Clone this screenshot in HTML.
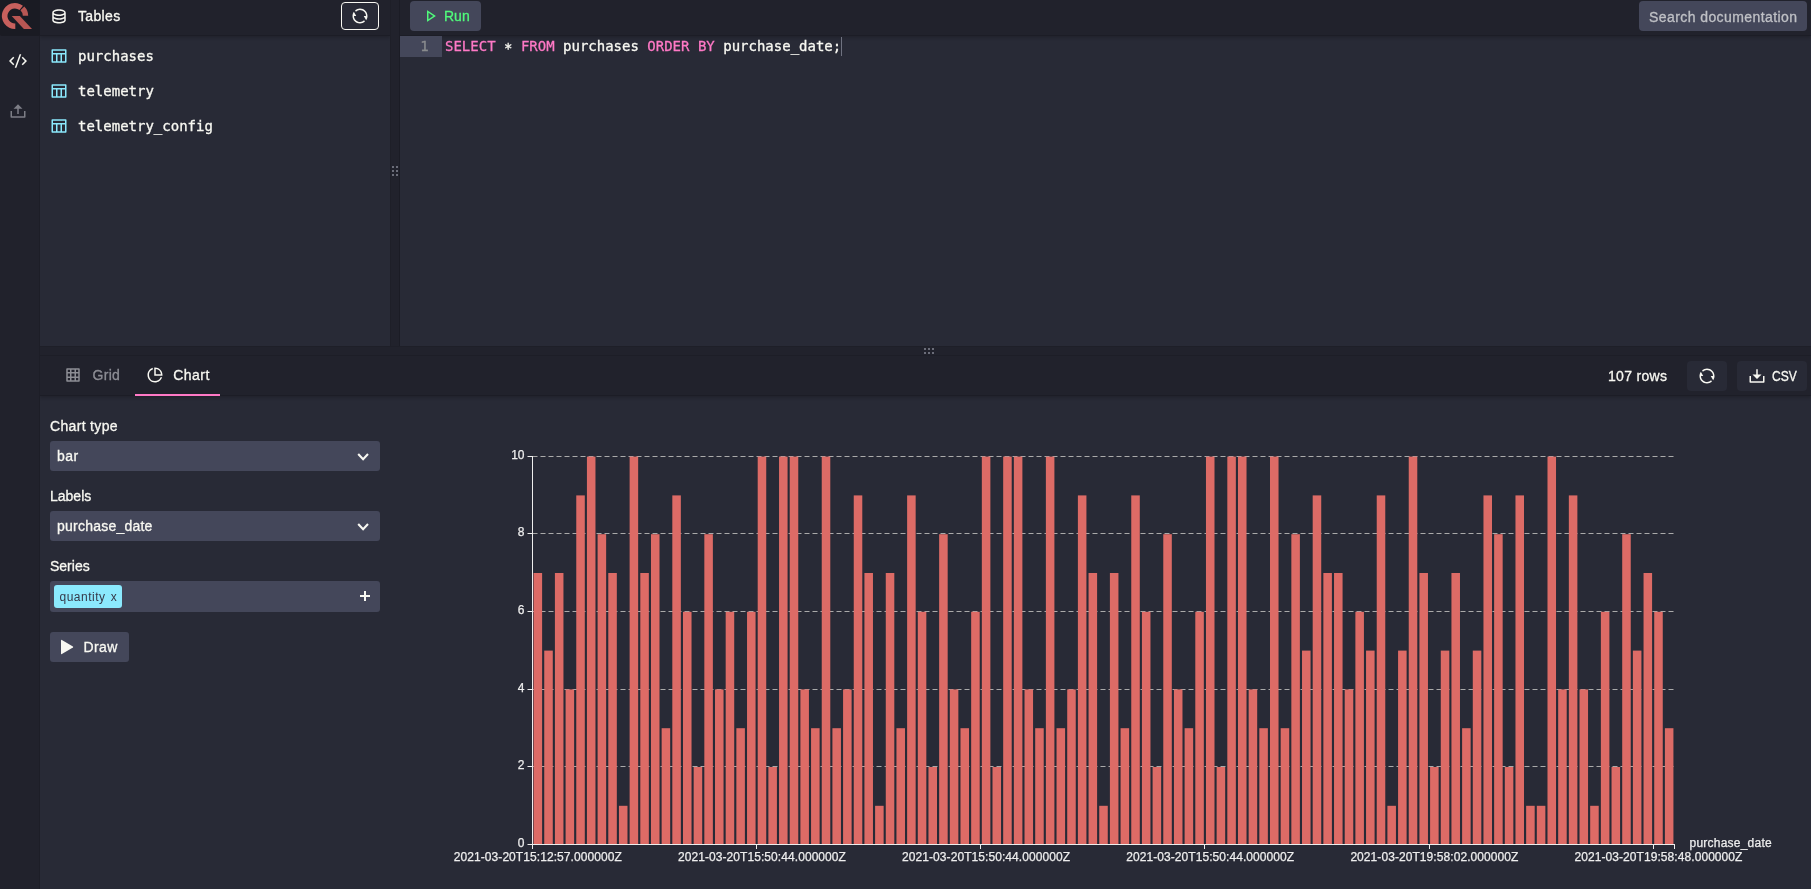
<!DOCTYPE html>
<html lang="en">
<head>
<meta charset="utf-8">
<title>QuestDB · Console</title>
<style>
*{box-sizing:border-box}
html,body{margin:0;padding:0}
body{width:1811px;height:889px;overflow:hidden;position:relative;background:#282a36;color:#f8f8f2;
  font-family:"Liberation Sans",sans-serif;font-size:14px;line-height:1}
#root{position:absolute;left:0;top:0;width:1811px;height:889px;will-change:transform;overflow:hidden}
.abs{position:absolute}
.mono{font-family:"DejaVu Sans Mono","Liberation Mono",monospace}
#sidebar{left:0;top:0;width:40px;height:889px;background:#21222c;border-right:1px solid #1d1e27}
#logo{left:0;top:0;width:40px;height:36px;background:#1a1b23;border-radius:0 0 2px 2px}
#lhead{left:40px;top:0;width:350px;height:36px;background:#21222c;border-bottom:1px solid #1c1d26;box-shadow:0 2px 3px rgba(0,0,0,.18)}
#vsplit{left:390px;top:0;width:10px;height:346px;background:#21222c;border-left:1px solid #1e1f28;border-right:1px solid #1b1c25}
#ehead{left:400px;top:0;width:1411px;height:36px;background:#21222c;border-bottom:1px solid #1c1d26;box-shadow:0 2px 3px rgba(0,0,0,.18)}
#hsplit{left:40px;top:346px;width:1771px;height:10px;background:#21222c;border-top:1px solid #1e1f28;border-bottom:1px solid #1e1f28}
#rhead{left:40px;top:356px;width:1771px;height:40px;background:#21222c;border-bottom:1px solid #1c1d26;box-shadow:0 2px 3px rgba(0,0,0,.18)}
.t{white-space:nowrap;position:absolute;-webkit-text-stroke:.3px}
.btn{position:absolute;border-radius:4px;background:#44475a}
.sel{position:absolute;left:50px;width:330px;height:30px;border-radius:3px;background:#44475a}
.chart{position:absolute;left:390px;top:396px}
.ctext{font-family:"Liberation Sans",sans-serif}
svg{display:block;overflow:visible}
</style>
</head>
<body>
<div id="root">

<!-- top-left: tables pane -->
<div class="abs" id="lhead"></div>
<div class="abs" id="ehead"></div>
<div class="abs" id="vsplit"></div>
<div class="abs" id="hsplit"></div>
<div class="abs" id="rhead"></div>

<!-- sidebar -->
<div class="abs" id="sidebar"></div>
<div class="abs" id="logo"></div>

<!-- Tables header -->
<span class="t" style="left:78px;top:9px;font-size:14px;letter-spacing:.35px">Tables</span>
<div class="abs" style="left:341px;top:2px;width:38px;height:28px;border:1px solid #f8f8f2;border-radius:4px;background:#282a36"></div>

<!-- table list -->
<span class="t mono" style="left:78px;top:49px;font-size:14px">purchases</span>
<span class="t mono" style="left:78px;top:84px;font-size:14px">telemetry</span>
<span class="t mono" style="left:78px;top:119px;font-size:14px">telemetry_config</span>

<!-- editor header -->
<div class="btn" style="left:410px;top:1px;width:71px;height:30px"></div>
<span class="t" style="left:444px;top:9px;font-size:14px;color:#50fa7b">Run</span>
<div class="btn" style="left:1639px;top:1px;width:168px;height:30px"></div>
<span class="t" style="left:1649px;top:10px;font-size:14px;color:#bfc0c5;letter-spacing:.42px">Search documentation</span>

<!-- editor -->
<div class="abs" style="left:400px;top:36px;width:42px;height:21px;background:#44475a"></div>
<span class="t mono" style="left:420.300px;top:39px;font-size:14px;color:#8a8b8e">1</span>
<span class="t mono" style="left:445px;top:39px;font-size:14px;white-space:pre"><span style="color:#ff79c6">SELECT</span> <span style="position:relative;top:2px">*</span> <span style="color:#ff79c6">FROM</span> purchases <span style="color:#ff79c6">ORDER</span> <span style="color:#ff79c6">BY</span> purchase_date;</span>
<div class="abs" style="left:841px;top:37px;width:1px;height:19px;background:#6f7280"></div>

<!-- result header -->
<span class="t" style="left:92.500px;top:368px;font-size:14px;color:#8d8e95;letter-spacing:.3px">Grid</span>
<span class="t" style="left:173.300px;top:368px;font-size:14px;letter-spacing:.45px">Chart</span>
<div class="abs" style="left:135px;top:394px;width:85px;height:2px;background:#ff79c6"></div>
<span class="t" style="left:1608px;top:369px;font-size:14px;letter-spacing:.3px">107 rows</span>
<div class="btn" style="left:1687px;top:361px;width:40px;height:30px;background:#282a36"></div>
<div class="btn" style="left:1737px;top:361px;width:70px;height:30px;background:#282a36"></div>
<span class="t" style="left:1771.500px;top:369px;font-size:14px;transform:scaleX(.86);transform-origin:0 0">CSV</span>

<!-- chart controls -->
<span class="t" style="left:50px;top:419px;font-size:14px;letter-spacing:.33px">Chart type</span>
<div class="sel" style="top:441px"></div>
<span class="t" style="left:57px;top:449px;font-size:14px;letter-spacing:.5px">bar</span>
<span class="t" style="left:50px;top:489px;font-size:14px">Labels</span>
<div class="sel" style="top:511px"></div>
<span class="t" style="left:57px;top:519px;font-size:14px;letter-spacing:.23px">purchase_date</span>
<span class="t" style="left:50px;top:559px;font-size:14px">Series</span>
<div class="sel" style="top:581px;height:31px"></div>
<div class="abs" style="left:54px;top:585px;width:68px;height:23px;border-radius:3px;background:#8be9fd"></div>
<span class="t" style="left:59.500px;top:591px;font-size:12px;color:#363949;letter-spacing:.5px;word-spacing:1.300px;-webkit-text-stroke:0">quantity x</span>
<div class="btn" style="left:50px;top:632px;width:79px;height:30px;border-radius:3px"></div>
<span class="t" style="left:83.500px;top:640px;font-size:14px;letter-spacing:.4px">Draw</span>

<!-- icons -->
<svg class="abs" style="left:50px;top:7px" width="18" height="18" viewBox="0 0 24 24" fill="#f8f8f2"><path d="M5 12.5c0 .313.461.858 1.53 1.393C7.914 14.585 9.877 15 12 15c2.123 0 4.086-.415 5.47-1.107 1.069-.535 1.53-1.08 1.53-1.393v-2.171C17.35 11.349 14.827 12 12 12s-5.35-.652-7-1.671V12.5zm14 2.829C17.35 16.349 14.827 17 12 17s-5.35-.652-7-1.671V17.5c0 .313.461.858 1.53 1.393C7.914 19.585 9.877 20 12 20c2.123 0 4.086-.415 5.47-1.107 1.069-.535 1.53-1.08 1.53-1.393v-2.171zM3 17.5v-10C3 5.015 7.03 3 12 3s9 2.015 9 4.5v10c0 2.485-4.03 4.5-9 4.5s-9-2.015-9-4.500zm9-7.5c2.123 0 4.086-.415 5.47-1.107C18.539 8.358 19 7.813 19 7.5c0-.313-.461-.858-1.53-1.393C16.086 5.415 14.123 5 12 5c-2.123 0-4.086.415-5.47 1.107C5.461 6.642 5 7.187 5 7.5c0 .313.461.858 1.53 1.393C7.914 9.585 9.877 10 12 10z"/></svg>
<svg class="abs" style="left:50px;top:47px" width="18" height="18" viewBox="0 0 24 24" fill="#8be9fd"><path d="M4 8h16V5H4v3zm10 11v-9h-4v9h4zm2 0h4v-9h-4v9zm-8 0v-9H4v9h4zM3 3h18a1 1 0 0 1 1 1v16a1 1 0 0 1-1 1H3a1 1 0 0 1-1-1V4a1 1 0 0 1 1-1z"/></svg>
<svg class="abs" style="left:50px;top:82px" width="18" height="18" viewBox="0 0 24 24" fill="#8be9fd"><path d="M4 8h16V5H4v3zm10 11v-9h-4v9h4zm2 0h4v-9h-4v9zm-8 0v-9H4v9h4zM3 3h18a1 1 0 0 1 1 1v16a1 1 0 0 1-1 1H3a1 1 0 0 1-1-1V4a1 1 0 0 1 1-1z"/></svg>
<svg class="abs" style="left:50px;top:117px" width="18" height="18" viewBox="0 0 24 24" fill="#8be9fd"><path d="M4 8h16V5H4v3zm10 11v-9h-4v9h4zm2 0h4v-9h-4v9zm-8 0v-9H4v9h4zM3 3h18a1 1 0 0 1 1 1v16a1 1 0 0 1-1 1H3a1 1 0 0 1-1-1V4a1 1 0 0 1 1-1z"/></svg>
<svg class="abs" style="left:9px;top:52px" width="18" height="18" viewBox="0 0 24 24" fill="#f8f8f2"><path d="M24 12l-5.657 5.657-1.414-1.414L21.172 12l-4.243-4.243 1.414-1.414L24 12zM2.828 12l4.243 4.243-1.414 1.414L0 12l5.657-5.657L7.07 7.757 2.828 12zm6.96 9H7.66l6.552-18h2.128L9.788 21z"/></svg>
<svg class="abs" style="left:9px;top:102px" width="18" height="18" viewBox="0 0 24 24" fill="#7d7e86"><path d="M4 19h16v-7h2v8a1 1 0 0 1-1 1H3a1 1 0 0 1-1-1v-8h2v7zm9-10v7h-2V9H6l6-6 6 6h-5z"/></svg>
<svg class="abs" style="left:351px;top:7px" width="18" height="18" viewBox="0 0 24 24" fill="#f8f8f2"><path d="M5.463 4.433A9.961 9.961 0 0 1 12 2c5.523 0 10 4.477 10 10 0 2.136-.67 4.116-1.81 5.74L17 12h3A8 8 0 0 0 6.46 6.228l-.997-1.795zm13.074 15.134A9.961 9.961 0 0 1 12 22C6.477 22 2 17.523 2 12c0-2.136.67-4.116 1.81-5.74L7 12H4a8 8 0 0 0 13.540 5.772l.997 1.795z"/></svg>
<svg class="abs" style="left:420.5px;top:7px" width="18" height="18" viewBox="0 0 24 24" fill="#50fa7b"><path d="M16.394 12L10 7.737v8.526L16.394 12zm2.982.416L8.777 19.482A.5.5 0 0 1 8 19.066V4.934a.5.5 0 0 1 .777-.416l10.599 7.066a.5.5 0 0 1 0 .832z"/></svg>
<svg class="abs" style="left:64px;top:366px" width="18" height="18" viewBox="0 0 24 24" fill="#8d8e95"><path d="M14 10h-4v4h4v-4zm2 0v4h3v-4h-3zm-2 9v-3h-4v3h4zm2 0h3v-3h-3v3zM14 5h-4v3h4V5zm2 0v3h3V5h-3zm-8 5H5v4h3v-4zm0 9v-3H5v3h3zM8 5H5v3h3V5zM4 3h16a1 1 0 0 1 1 1v16a1 1 0 0 1-1 1H4a1 1 0 0 1-1-1V4a1 1 0 0 1 1-1z"/></svg>
<svg class="abs" style="left:146px;top:366px" width="18" height="18" viewBox="0 0 24 24" fill="#f8f8f2"><path d="M9 2.458v2.124A8.003 8.003 0 0 0 12 20a8.003 8.003 0 0 0 7.419-5h2.123c-1.274 4.057-5.064 7-9.542 7-5.523 0-10-4.477-10-10 0-4.478 2.943-8.268 7-9.542zM12 2c5.523 0 10 4.477 10 10 0 .338-.017.671-.05 1H11V2.050c.329-.033.662-.05 1-.05zm1 2.062V11h6.938A8.004 8.004 0 0 0 13 4.062z"/></svg>
<svg class="abs" style="left:1698px;top:367px" width="18" height="18" viewBox="0 0 24 24" fill="#f8f8f2"><path d="M5.463 4.433A9.961 9.961 0 0 1 12 2c5.523 0 10 4.477 10 10 0 2.136-.67 4.116-1.81 5.74L17 12h3A8 8 0 0 0 6.46 6.228l-.997-1.795zm13.074 15.134A9.961 9.961 0 0 1 12 22C6.477 22 2 17.523 2 12c0-2.136.67-4.116 1.81-5.74L7 12H4a8 8 0 0 0 13.540 5.772l.997 1.795z"/></svg>
<svg class="abs" style="left:1748px;top:366.5px" width="18" height="18" viewBox="0 0 24 24" fill="#f8f8f2"><path d="M13 10h5l-6 6-6-6h5V3h2v7zm-9 9h16v-7h2v8a1 1 0 0 1-1 1H3a1 1 0 0 1-1-1v-8h2v7z"/></svg>
<svg class="abs" style="left:353px;top:441px" width="20" height="30" viewBox="0 0 20 30"><polyline points="5.200,13 10.100,18.200 15,13" fill="none" stroke="#f8f8f2" stroke-width="2.100"/></svg>
<svg class="abs" style="left:353px;top:511px" width="20" height="30" viewBox="0 0 20 30"><polyline points="5.200,13 10.100,18.200 15,13" fill="none" stroke="#f8f8f2" stroke-width="2.100"/></svg>
<svg class="abs" style="left:359px;top:590px" width="12" height="12" viewBox="0 0 12 12" fill="#f8f8f2"><rect x="5" y="1" width="2" height="10"/><rect x="1" y="5" width="10" height="2"/></svg>
<svg class="abs" style="left:58px;top:637px" width="18" height="20" viewBox="0 0 18 20"><path d="M3 3.4v13.200a.6.6 0 0 0 .9.500l11-6.600a.6.6 0 0 0 0-1L3.900 2.900a.6.6 0 0 0-.9.500z" fill="#f8f8f2"/></svg>
<svg class="abs" style="left:0;top:0" width="40" height="36" viewBox="0 0 40 36">
<path d="M15.300 29A13.050 13.050 0 1 1 22.930 5.670L19.490 10.080A7.450 7.450 0 1 0 15.300 23.400z" fill="#c8605d"/>
<path d="M24.300 6.550A13.300 13.300 0 0 1 28.200 15.800H22.800A7.900 7.900 0 0 0 20.490 10.360z" fill="#b95754"/>
<path d="M11.700 16H19.800L32 28.900H23.900z" fill="#b85653"/>
</svg>
<svg class="abs" style="left:392px;top:166px" width="6" height="10" viewBox="0 0 6 10" fill="#6b6d79"><rect x="0" y="0" width="2" height="2"/><rect x="4" y="0" width="2" height="2"/><rect x="0" y="4" width="2" height="2"/><rect x="4" y="4" width="2" height="2"/><rect x="0" y="8" width="2" height="2"/><rect x="4" y="8" width="2" height="2"/></svg>
<svg class="abs" style="left:924px;top:348px" width="10" height="6" viewBox="0 0 10 6" fill="#6b6d79"><rect x="0" y="0" width="2" height="2"/><rect x="4" y="0" width="2" height="2"/><rect x="8" y="0" width="2" height="2"/><rect x="0" y="4" width="2" height="2"/><rect x="4" y="4" width="2" height="2"/><rect x="8" y="4" width="2" height="2"/></svg>

<svg class="chart" width="1421" height="493" viewBox="390 396 1421 493">
<line x1="532.5" x2="1674.5" y1="766.5" y2="766.5" stroke="#aaa" stroke-width="1" stroke-dasharray="5 3"/>
<line x1="532.5" x2="1674.5" y1="689.5" y2="689.5" stroke="#aaa" stroke-width="1" stroke-dasharray="5 3"/>
<line x1="532.5" x2="1674.5" y1="611.5" y2="611.5" stroke="#aaa" stroke-width="1" stroke-dasharray="5 3"/>
<line x1="532.5" x2="1674.5" y1="533.5" y2="533.5" stroke="#aaa" stroke-width="1" stroke-dasharray="5 3"/>
<line x1="532.5" x2="1674.5" y1="456.5" y2="456.5" stroke="#aaa" stroke-width="1" stroke-dasharray="5 3"/>
<g fill="#dd6b66">
<rect x="533.57" y="573.00" width="8.54" height="271.50"/>
<rect x="544.24" y="650.60" width="8.54" height="193.90"/>
<rect x="554.91" y="573.00" width="8.54" height="271.50"/>
<rect x="565.59" y="689.40" width="8.54" height="155.10"/>
<rect x="576.26" y="495.40" width="8.54" height="349.10"/>
<rect x="586.93" y="456.60" width="8.54" height="387.90"/>
<rect x="597.60" y="534.20" width="8.54" height="310.30"/>
<rect x="608.28" y="573.00" width="8.54" height="271.50"/>
<rect x="618.95" y="805.80" width="8.54" height="38.70"/>
<rect x="629.62" y="456.60" width="8.54" height="387.90"/>
<rect x="640.30" y="573.00" width="8.54" height="271.50"/>
<rect x="650.97" y="534.20" width="8.54" height="310.30"/>
<rect x="661.64" y="728.20" width="8.54" height="116.30"/>
<rect x="672.31" y="495.40" width="8.54" height="349.10"/>
<rect x="682.99" y="611.80" width="8.54" height="232.70"/>
<rect x="693.66" y="767.00" width="8.54" height="77.50"/>
<rect x="704.33" y="534.20" width="8.54" height="310.30"/>
<rect x="715.01" y="689.40" width="8.54" height="155.10"/>
<rect x="725.68" y="611.80" width="8.54" height="232.70"/>
<rect x="736.35" y="728.20" width="8.54" height="116.30"/>
<rect x="747.03" y="611.80" width="8.54" height="232.70"/>
<rect x="757.70" y="456.60" width="8.54" height="387.90"/>
<rect x="768.37" y="767.00" width="8.54" height="77.50"/>
<rect x="779.04" y="456.60" width="8.54" height="387.90"/>
<rect x="789.72" y="456.60" width="8.54" height="387.90"/>
<rect x="800.39" y="689.40" width="8.54" height="155.10"/>
<rect x="811.06" y="728.20" width="8.54" height="116.30"/>
<rect x="821.74" y="456.60" width="8.54" height="387.90"/>
<rect x="832.41" y="728.20" width="8.54" height="116.30"/>
<rect x="843.08" y="689.40" width="8.54" height="155.10"/>
<rect x="853.75" y="495.40" width="8.54" height="349.10"/>
<rect x="864.43" y="573.00" width="8.54" height="271.50"/>
<rect x="875.10" y="805.80" width="8.54" height="38.70"/>
<rect x="885.77" y="573.00" width="8.54" height="271.50"/>
<rect x="896.45" y="728.20" width="8.54" height="116.30"/>
<rect x="907.12" y="495.40" width="8.54" height="349.10"/>
<rect x="917.79" y="611.80" width="8.54" height="232.70"/>
<rect x="928.46" y="767.00" width="8.54" height="77.50"/>
<rect x="939.14" y="534.20" width="8.54" height="310.30"/>
<rect x="949.81" y="689.40" width="8.54" height="155.10"/>
<rect x="960.48" y="728.20" width="8.54" height="116.30"/>
<rect x="971.16" y="611.80" width="8.54" height="232.70"/>
<rect x="981.83" y="456.60" width="8.54" height="387.90"/>
<rect x="992.50" y="767.00" width="8.54" height="77.50"/>
<rect x="1003.17" y="456.60" width="8.54" height="387.90"/>
<rect x="1013.85" y="456.60" width="8.54" height="387.90"/>
<rect x="1024.52" y="689.40" width="8.54" height="155.10"/>
<rect x="1035.19" y="728.20" width="8.54" height="116.30"/>
<rect x="1045.87" y="456.60" width="8.54" height="387.90"/>
<rect x="1056.54" y="728.20" width="8.54" height="116.30"/>
<rect x="1067.21" y="689.40" width="8.54" height="155.10"/>
<rect x="1077.89" y="495.40" width="8.54" height="349.10"/>
<rect x="1088.56" y="573.00" width="8.54" height="271.50"/>
<rect x="1099.23" y="805.80" width="8.54" height="38.70"/>
<rect x="1109.90" y="573.00" width="8.54" height="271.50"/>
<rect x="1120.58" y="728.20" width="8.54" height="116.30"/>
<rect x="1131.25" y="495.40" width="8.54" height="349.10"/>
<rect x="1141.92" y="611.80" width="8.54" height="232.70"/>
<rect x="1152.60" y="767.00" width="8.54" height="77.50"/>
<rect x="1163.27" y="534.20" width="8.54" height="310.30"/>
<rect x="1173.94" y="689.40" width="8.54" height="155.10"/>
<rect x="1184.61" y="728.20" width="8.54" height="116.30"/>
<rect x="1195.29" y="611.80" width="8.54" height="232.70"/>
<rect x="1205.96" y="456.60" width="8.54" height="387.90"/>
<rect x="1216.63" y="767.00" width="8.54" height="77.50"/>
<rect x="1227.31" y="456.60" width="8.54" height="387.90"/>
<rect x="1237.98" y="456.60" width="8.54" height="387.90"/>
<rect x="1248.65" y="689.40" width="8.54" height="155.10"/>
<rect x="1259.32" y="728.20" width="8.54" height="116.30"/>
<rect x="1270.00" y="456.60" width="8.54" height="387.90"/>
<rect x="1280.67" y="728.20" width="8.54" height="116.30"/>
<rect x="1291.34" y="534.20" width="8.54" height="310.30"/>
<rect x="1302.02" y="650.60" width="8.54" height="193.90"/>
<rect x="1312.69" y="495.40" width="8.54" height="349.10"/>
<rect x="1323.36" y="573.00" width="8.54" height="271.50"/>
<rect x="1334.03" y="573.00" width="8.54" height="271.50"/>
<rect x="1344.71" y="689.40" width="8.54" height="155.10"/>
<rect x="1355.38" y="611.80" width="8.54" height="232.70"/>
<rect x="1366.05" y="650.60" width="8.54" height="193.90"/>
<rect x="1376.73" y="495.40" width="8.54" height="349.10"/>
<rect x="1387.40" y="805.80" width="8.54" height="38.70"/>
<rect x="1398.07" y="650.60" width="8.54" height="193.90"/>
<rect x="1408.74" y="456.60" width="8.54" height="387.90"/>
<rect x="1419.42" y="573.00" width="8.54" height="271.50"/>
<rect x="1430.09" y="767.00" width="8.54" height="77.50"/>
<rect x="1440.76" y="650.60" width="8.54" height="193.90"/>
<rect x="1451.44" y="573.00" width="8.54" height="271.50"/>
<rect x="1462.11" y="728.20" width="8.54" height="116.30"/>
<rect x="1472.78" y="650.60" width="8.54" height="193.90"/>
<rect x="1483.46" y="495.40" width="8.54" height="349.10"/>
<rect x="1494.13" y="534.20" width="8.54" height="310.30"/>
<rect x="1504.80" y="767.00" width="8.54" height="77.50"/>
<rect x="1515.47" y="495.40" width="8.54" height="349.10"/>
<rect x="1526.15" y="805.80" width="8.54" height="38.70"/>
<rect x="1536.82" y="805.80" width="8.54" height="38.70"/>
<rect x="1547.49" y="456.60" width="8.54" height="387.90"/>
<rect x="1558.17" y="689.40" width="8.54" height="155.10"/>
<rect x="1568.84" y="495.40" width="8.54" height="349.10"/>
<rect x="1579.51" y="689.40" width="8.54" height="155.10"/>
<rect x="1590.18" y="805.80" width="8.54" height="38.70"/>
<rect x="1600.86" y="611.80" width="8.54" height="232.70"/>
<rect x="1611.53" y="767.00" width="8.54" height="77.50"/>
<rect x="1622.20" y="534.20" width="8.54" height="310.30"/>
<rect x="1632.88" y="650.60" width="8.54" height="193.90"/>
<rect x="1643.55" y="573.00" width="8.54" height="271.50"/>
<rect x="1654.22" y="611.80" width="8.54" height="232.70"/>
<rect x="1664.89" y="728.20" width="8.54" height="116.30"/>
</g>
<g stroke="#eee" stroke-width="1" fill="none">
<line x1="532.5" x2="532.5" y1="456" y2="845"/>
<line x1="532.0" x2="1675.0" y1="844.5" y2="844.5"/>
<line x1="527.5" x2="532.5" y1="844.5" y2="844.5"/>
<line x1="527.5" x2="532.5" y1="766.5" y2="766.5"/>
<line x1="527.5" x2="532.5" y1="689.5" y2="689.5"/>
<line x1="527.5" x2="532.5" y1="611.5" y2="611.5"/>
<line x1="527.5" x2="532.5" y1="533.5" y2="533.5"/>
<line x1="527.5" x2="532.5" y1="456.5" y2="456.5"/>
<line x1="532.5" x2="532.5" y1="844.5" y2="849"/>
<line x1="756.5" x2="756.5" y1="844.5" y2="849"/>
<line x1="980.5" x2="980.5" y1="844.5" y2="849"/>
<line x1="1204.5" x2="1204.5" y1="844.5" y2="849"/>
<line x1="1429.5" x2="1429.5" y1="844.5" y2="849"/>
<line x1="1653.5" x2="1653.5" y1="844.5" y2="849"/>
<line x1="1674.5" x2="1674.5" y1="844.5" y2="849"/>
</g>
<g class="ctext" fill="#eee" font-size="12" stroke="#eee" stroke-width=".25">
<text x="524.5" y="846.8" text-anchor="end">0</text>
<text x="524.5" y="768.8" text-anchor="end">2</text>
<text x="524.5" y="691.8" text-anchor="end">4</text>
<text x="524.5" y="613.8" text-anchor="end">6</text>
<text x="524.5" y="535.8" text-anchor="end">8</text>
<text x="524.5" y="458.8" text-anchor="end">10</text>
<text x="537.8" y="861" text-anchor="middle" letter-spacing=".07">2021-03-20T15:12:57.000000Z</text>
<text x="762.0" y="861" text-anchor="middle" letter-spacing=".07">2021-03-20T15:50:44.000000Z</text>
<text x="986.1" y="861" text-anchor="middle" letter-spacing=".07">2021-03-20T15:50:44.000000Z</text>
<text x="1210.2" y="861" text-anchor="middle" letter-spacing=".07">2021-03-20T15:50:44.000000Z</text>
<text x="1434.4" y="861" text-anchor="middle" letter-spacing=".07">2021-03-20T19:58:02.000000Z</text>
<text x="1658.5" y="861" text-anchor="middle" letter-spacing=".07">2021-03-20T19:58:48.000000Z</text>
<text x="1689.500" y="847" letter-spacing=".23">purchase_date</text>
</g>
</svg>

</div>
</body>
</html>
